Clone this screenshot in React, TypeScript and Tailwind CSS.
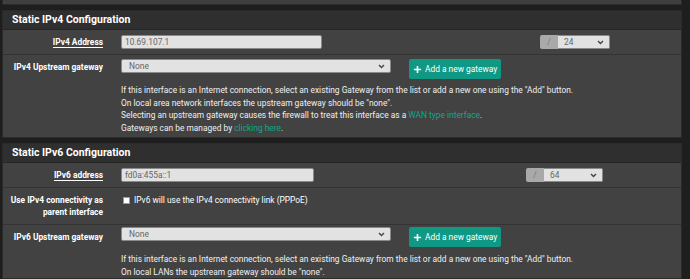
import React from "react";

function Chevron() {
  return (
    <svg width="7" height="5" viewBox="0 0 7 5" className="shrink-0">
      <path d="M1 1l2.5 2.5L6 1" fill="none" stroke="#444" strokeWidth="1.4" />
    </svg>
  );
}

function Select({ value, w }: { value: string; w: string }) {
  return (
    <div
      className={`${w} h-[14px] bg-[#e2e2e2] border border-[#8a8a8a] rounded-[2px] flex items-center justify-between pl-[7px] pr-[5px] text-[#666]`}
    >
      <span>{value}</span>
      <Chevron />
    </div>
  );
}

function CidrSelect({ value, w }: { value: string; w: string }) {
  return (
    <div className="flex h-[14px]">
      <div className="w-[18px] bg-[#a9a9a9] text-[#7a7a7a] flex items-center justify-center rounded-l-[2px]">/</div>
      <div className={`${w} bg-[#e2e2e2] border border-[#8a8a8a] border-l-0 rounded-r-[2px] flex items-center justify-between pl-[6px] pr-[5px] text-[#666]`}>
        <span>{value}</span>
        <Chevron />
      </div>
    </div>
  );
}

function AddGatewayButton() {
  return (
    <button className="w-[92px] h-[20px] bg-[#0f9884] rounded-[2px] flex items-center pl-[4px] gap-[3px] text-white text-[8.4px] whitespace-nowrap">
      <svg width="9" height="9" viewBox="0 0 10 10" className="shrink-0">
        <path d="M5 1v8M1 5h8" stroke="white" strokeWidth="1.8" />
      </svg>
      <span>Add a new gateway</span>
    </button>
  );
}

function Label({ children, underline }: { children: React.ReactNode; underline?: boolean }) {
  return (
    <div className="w-[100px] shrink-0 text-right font-bold text-white leading-[12px]">
      <span className={underline ? "border-b border-white" : ""}>{children}</span>
    </div>
  );
}

function Heading({ title }: { title: string }) {
  return (
    <div className="h-[19px] bg-[#2f2f2f] border-b border-[#262626] flex items-center pl-[9px] text-white font-bold text-[10.5px]">
      {title}
    </div>
  );
}

export default function App() {
  const link = "text-[#14a58c]";
  return (
    <div
      className="w-[690px] h-[279px] overflow-hidden bg-[#1e1e1e] text-[8.4px] text-white"
      style={{ fontFamily: "Roboto, 'Liberation Sans', sans-serif" }}
    >
      {/* tail of the panel above */}
      <div className="ml-[2px] w-[680px] h-[5px] bg-[#3f3f3f] border border-t-0 border-[#2a2a2a]" />

      {/* IPv4 */}
      <div className="ml-[2px] mt-[5px] w-[680px] border border-[#2a2a2a] bg-[#424242]">
        <Heading title="Static IPv4 Configuration" />
        <div className="h-[25px] flex items-center gap-[18px] border-b border-[#333]">
          <Label underline>IPv4 Address</Label>
          <div className="w-[201px] h-[14px] bg-[#e2e2e2] border border-[#8a8a8a] rounded-[2px] flex items-center pl-[3px] text-[#666]">
            10.69.107.1
          </div>
          <div className="ml-[200px]">
            <CidrSelect value="24" w="w-[52px]" />
          </div>
        </div>
        <div className="h-[82px] flex gap-[18px] pt-[4px]">
          <div className="pt-[2px]">
            <Label>IPv4 Upstream gateway</Label>
          </div>
          <div className="flex flex-col">
            <div className="flex items-start gap-[18px]">
              <Select value="None" w="w-[270px]" />
              <AddGatewayButton />
            </div>
            <div className="mt-[5px] leading-[12.7px] text-[#f0f0f0]">
              <div>If this interface is an Internet connection, select an existing Gateway from the list or add a new one using the "Add" button.</div>
              <div>On local area network interfaces the upstream gateway should be "none".</div>
              <div>
                Selecting an upstream gateway causes the firewall to treat this interface as a <span className={link}>WAN type interface</span>.
              </div>
              <div>
                Gateways can be managed by <span className={link}>clicking here</span>.
              </div>
            </div>
          </div>
        </div>
      </div>

      {/* IPv6 */}
      <div className="ml-[2px] mt-[5px] w-[680px] border border-[#2a2a2a] bg-[#424242]">
        <Heading title="Static IPv6 Configuration" />
        <div className="h-[25px] flex items-center gap-[18px] border-b border-[#333]">
          <Label underline>IPv6 address</Label>
          <div className="w-[193px] h-[14px] bg-[#e2e2e2] border border-[#8a8a8a] rounded-[2px] flex items-center pl-[3px] text-[#666]">
            fd0a:455a::1
          </div>
          <div className="ml-[194px]">
            <CidrSelect value="64" w="w-[59px]" />
          </div>
        </div>
        <div className="h-[37px] flex items-center gap-[18px] border-b border-[#333]">
          <Label>
            Use IPv4 connectivity as
            <br />
            parent interface
          </Label>
          <div className="flex items-center gap-[4px] -mt-[11px]">
            <div className="w-[7px] h-[7px] bg-white border border-[#999] ml-[2px]" />
            <span>IPv6 will use the IPv4 connectivity link (PPPoE)</span>
          </div>
        </div>
        <div className="flex gap-[18px] pt-[2px]">
          <div className="pt-[4px]">
            <Label>IPv6 Upstream gateway</Label>
          </div>
          <div className="flex flex-col">
            <div className="flex items-start gap-[18px]">
              <Select value="None" w="w-[270px]" />
              <AddGatewayButton />
            </div>
            <div className="mt-[6px] leading-[12.7px] text-[#f0f0f0]">
              <div>If this interface is an Internet connection, select an existing Gateway from the list or add a new one using the "Add" button.</div>
              <div>On local LANs the upstream gateway should be "none".</div>
            </div>
          </div>
        </div>
      </div>
    </div>
  );
}
